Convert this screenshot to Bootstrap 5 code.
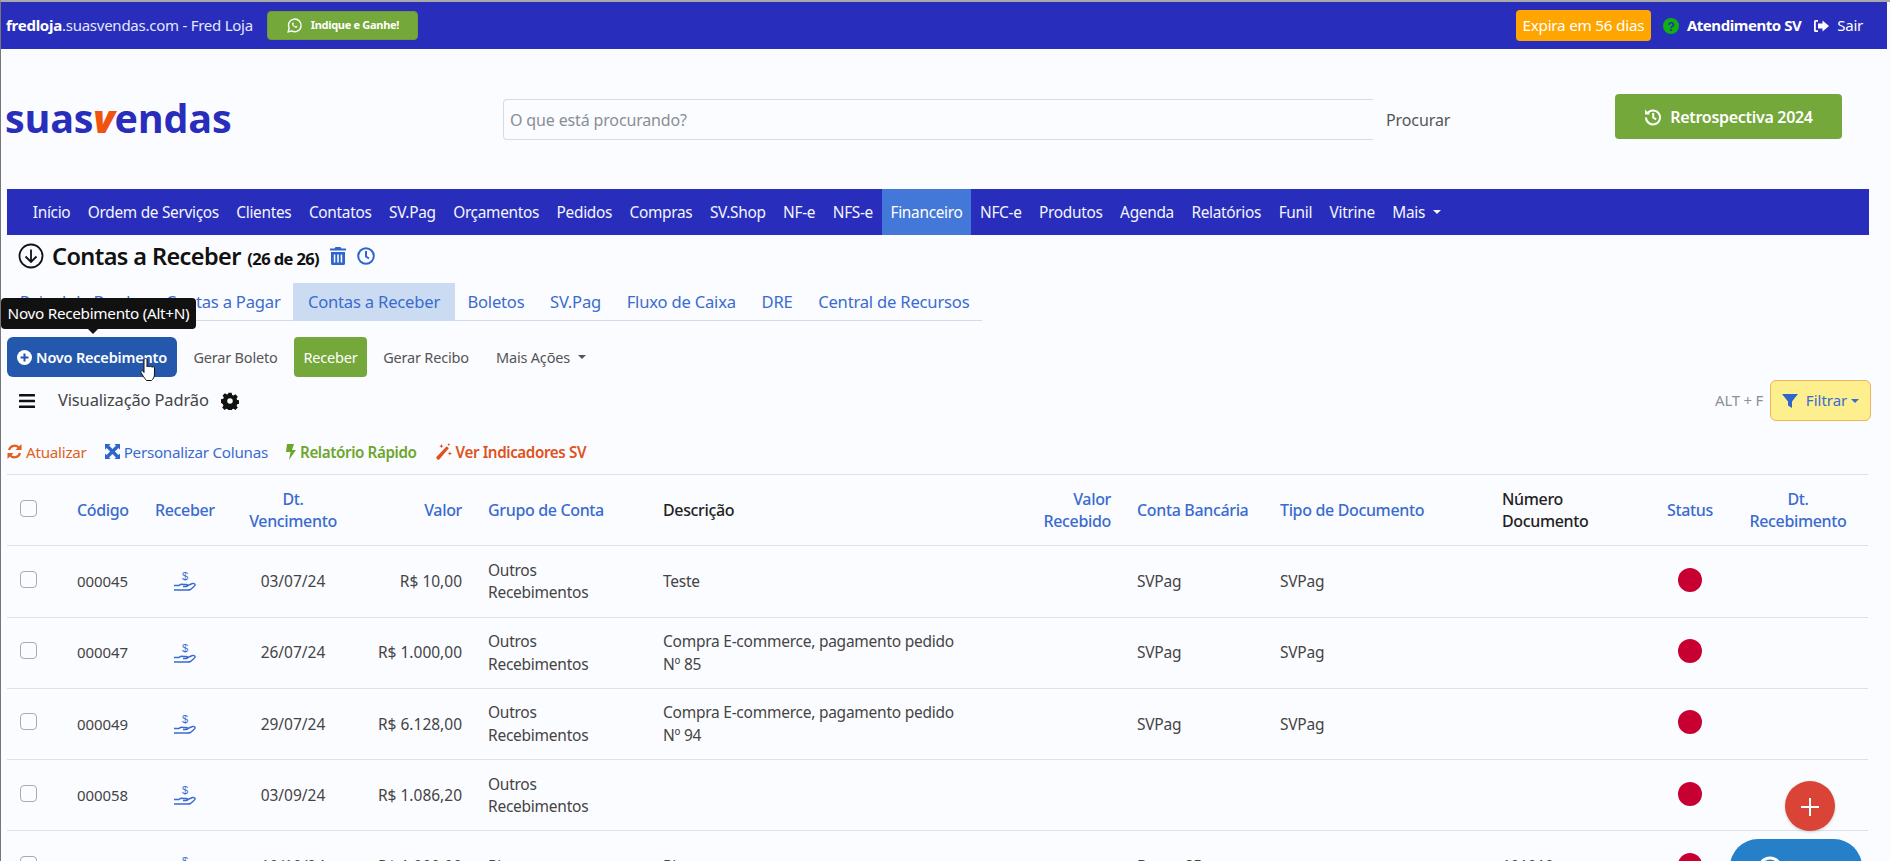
<!DOCTYPE html>
<html lang="pt-BR">
<head>
<meta charset="utf-8">
<title>Contas a Receber</title>
<link href="https://cdn.jsdelivr.net/npm/bootstrap@5.3.0/dist/css/bootstrap.min.css" rel="stylesheet">
<style>
:root{--sv-blue:#282ebb;--sv-link:#3a6bd0;--sv-green:#75a83a;}
html,body{height:861px;overflow:hidden;}
body{background:#fbfcff;font-family:"Noto Sans","Open Sans",sans-serif;font-size:15px;color:#444;letter-spacing:-.25px;}
.page-frame{height:861px;border-top:2px solid #a9a9a9;border-left:1px solid #777;position:relative;overflow:hidden;}
.top-strip{background:var(--sv-blue);height:47px;margin-right:3px;padding:0 24px 0 5px;color:#e4e6fa;font-size:15px;}
.top-strip b{color:#fff;font-weight:700;}
.indique{background:var(--sv-green);color:#fff;font-size:11px;font-weight:700;border:1px solid #6d9c36;border-radius:4px;padding:0;width:151px;height:29px;margin-left:14px;letter-spacing:-.3px;}
.indique:hover{background:var(--sv-green);color:#fff;}
.expira{background:#ffa500;color:#fff;font-size:15.300px;border-radius:4px;width:135px;height:31px;line-height:31px;text-align:center;}
.top-link{color:#fff;font-size:15px;}
.top-strip b.top-link{letter-spacing:-.45px;margin-right:12px;}
.gap-icon{margin:0 8px 0 12px;}
.head-zone{height:140px;padding:0 48px 0 4px;}
.logo-text{font-family:"Open Sans","Noto Sans",sans-serif;font-size:39.500px;font-weight:700;color:var(--sv-blue);letter-spacing:-.2px;line-height:1;width:498px;flex:none;}
.logo-text i{color:#f0530f;font-weight:800;}
.search-box{width:870px;height:41px;border:1px solid #d8dbe2;border-right:0;border-radius:4px 0 0 4px;background:transparent;font-size:16px;padding:2px 6px 0;letter-spacing:-.15px;box-shadow:none;flex:none;}
.search-box::placeholder{color:#888e96;}
.search-go{color:#555;font-size:16px;padding:2px 13px 0;border:0;letter-spacing:-.1px;}
.retro{background:var(--sv-green);color:#fff;width:227px;height:45px;font-size:16px;font-weight:600;border:0;border-radius:4px;margin-left:auto;margin-bottom:5px;letter-spacing:-.3px;}
.retro:hover{background:var(--sv-green);color:#fff;}
.main-menu{background:var(--sv-blue);height:46px;margin:0 21px 0 6px;padding-left:17px;flex-wrap:nowrap;}
.main-menu .nav-link{color:#f4f5ff;font-size:15.400px;padding:0 8.760px;line-height:47px;height:46px;white-space:nowrap;letter-spacing:-.3px;}
.main-menu .nav-link.active{background:#4377d8;color:#fff;}
.main-menu .dropdown-toggle::after{margin-left:8px;}
.title-row{height:48px;padding:0 0 6px 17px;color:#111;}
.title-row h1{font-size:23.500px;font-weight:600;margin:0 11px 0 8px;letter-spacing:-.6px;}
.title-row small{font-size:16.500px;font-weight:700;margin-left:1px;letter-spacing:-.6px;}
.fin-tabs{width:975px;margin-left:6px;border-bottom:1px solid #d3dceb;height:38px;flex-wrap:nowrap;}
.fin-tabs .nav-link{color:var(--sv-link);font-size:16.600px;padding:0 12.800px;line-height:38px;border:0;border-radius:0;white-space:nowrap;letter-spacing:-.2px;}
.fin-tabs .nav-link.active{background:#cbdcf2;color:var(--sv-link);padding:0 14.500px;}
.act-row{position:relative;margin:16px 0 0 6px;height:40px;gap:0;}
.act-btn{color:#555;font-size:14.500px;padding:0;height:40px;line-height:40px;border:0;letter-spacing:-.2px;}
.act-btn.dropdown-toggle::after{margin-left:8px;}
.act-new{background:#2458ad;color:#fff;width:170px;font-weight:600;font-size:14.500px;position:relative;}
.act-new:hover{background:#2458ad;color:#fff;}
.act-get{background:var(--sv-green);color:#fff;width:73px;border-radius:4px;}
.act-get:hover{background:var(--sv-green);color:#fff;}
.tooltip.tip-box{position:absolute;left:-6px;top:-39px;margin:0;padding:0 0 6px;opacity:1;}
.tip-box .tooltip-inner{background:#111;max-width:none;width:195px;height:31px;line-height:31px;padding:0;font-size:15.300px;text-align:center;border-radius:4px;letter-spacing:-.3px;font-family:"Noto Sans",sans-serif;white-space:nowrap;}
.tip-box .tooltip-arrow{left:86px;bottom:0;position:absolute;}
.tip-box .tooltip-arrow::before{border-top-color:#111;}
.cursor-hand{position:absolute;left:133px;top:20px;}
.view-row{height:44px;margin-left:18px;margin-right:19px;padding-top:3px;}
.view-name{font-size:16.500px;color:#444;margin:0 12px 0 23px;letter-spacing:-.15px;}
.alt-hint{color:#8c9196;font-size:15px;margin-right:7px;}
.filter-btn{background:#fdef8e;border:1px solid #f0b45f;color:var(--sv-link);font-size:15px;width:101px;height:41px;padding:0;}
.filter-btn:hover{background:#fdef8e;color:var(--sv-link);}
.link-row{margin:15px 0 6px 6px;height:32px;gap:18px;font-size:15.200px;}
.link-row span{white-space:nowrap;display:inline-flex;align-items:center;gap:4px;}
.c-orange{color:#e0611c;}
.c-blue{color:var(--sv-link);}
.c-green{color:#6da62c;font-weight:600;letter-spacing:-.4px;}
.c-redorange{color:#e0521c;font-weight:600;letter-spacing:-.4px;}
.grid-zone{margin:0 21px 0 6px;}
.data-grid{table-layout:fixed;width:1861px;margin:0;--bs-table-bg:transparent;border-top:1px solid #dee2e6;}
.data-grid th,.data-grid td{padding:0 8px;vertical-align:middle;line-height:22.500px;border-color:#dee2e6;color:#444;font-size:15.500px;font-weight:400;}
.data-grid tr{height:71.250px;}
.data-grid th{font-weight:500;color:#222;letter-spacing:-.35px;font-size:16px;}
.data-grid th.lnk{color:var(--sv-link);}
.data-grid .chk{padding-left:13px;}
.data-grid .form-check-input{width:17px;height:17px;margin:0;border-color:#aaa;background-color:transparent;border-radius:4px;display:block;position:relative;top:-2px;}
.data-grid .rgt{text-align:right;padding-right:18px;}
.data-grid .ctr{text-align:center;}
.data-grid td.dte{letter-spacing:0;}
.data-grid td.cde{letter-spacing:-.1px;font-size:15px;}
.status-dot{display:block;width:24px;height:24px;border-radius:50%;background:#c80032;margin:-3px auto 0;}
.fab-add{position:absolute;left:1784px;top:779px;width:50px;height:50px;border-radius:50%;background:#d94436;border:0;padding:0;box-shadow:0 1px 3px rgba(0,0,0,.2);}
.chat-pill{position:absolute;left:1729px;top:837px;width:132px;height:60px;border-radius:28px;background:#2680c9;}
.chat-pill svg{position:absolute;left:25px;top:15px;}
</style>
</head>
<body>
<div class="page-frame">

<div class="top-strip d-flex align-items-center">
  <span><b>fredloja</b>.suasvendas.com - Fred Loja</span>
  <button class="btn indique d-flex align-items-center justify-content-center gap-2" type="button">
    <svg width="17" height="17" viewBox="0 0 24 24" fill="none" stroke="#fff" stroke-width="2"><path d="M3 21l1.400-5A9 9 0 1 1 8 19.700z"/><path d="M9 8c-1 1-.8 2.500.7 4.500s3.300 3 4.800 2.800c1-.2 1.500-1 1.500-1.800l-2-1-1 .9c-1-.4-2.200-1.600-2.700-2.800l.8-1-1-2z" fill="#fff" stroke="none"/></svg>
    Indique e Ganhe!
  </button>
  <div class="ms-auto d-flex align-items-center">
    <span class="expira">Expira em 56 dias</span>
    <svg class="gap-icon" width="16" height="16" viewBox="0 0 16 16"><circle cx="8" cy="8" r="8" fill="#10b010"/><text x="8" y="12.500" font-size="12" font-weight="700" text-anchor="middle" fill="#282ebb" font-family="Liberation Sans">?</text></svg>
    <b class="top-link">Atendimento SV</b>
    <svg width="16" height="14" viewBox="0 0 16 14" fill="#fff"><path d="M5 1H2.500A1.500 1.500 0 0 0 1 2.500v9A1.500 1.500 0 0 0 2.500 13H5v-1.800H2.800V2.800H5z"/><path d="M9.500 1.500L16 7l-6.500 5.500V9.500H5v-5h4.500z"/></svg>
    <span class="top-link ms-2">Sair</span>
  </div>
</div>

<div class="head-zone d-flex align-items-center">
  <div class="logo-text">suas<i>v</i>endas</div>
  <input class="form-control search-box" placeholder="O que está procurando?">
  <button class="btn search-go" type="button">Procurar</button>
  <button class="btn retro d-flex align-items-center justify-content-center gap-2" type="button">
    <svg width="18" height="18" viewBox="0 0 18 18" fill="none" stroke="#fff" stroke-width="2"><path d="M3.200 5.500A7 7 0 1 1 2 9.500"/><path d="M1 1.500v5h5z" fill="#fff" stroke="none"/><path d="M9.200 5v4.500l3 1.800"/></svg>
    Retrospectiva 2024
  </button>
</div>

<ul class="nav main-menu">
  <li class="nav-item"><a class="nav-link" href="#">Início</a></li>
  <li class="nav-item"><a class="nav-link" href="#">Ordem de Serviços</a></li>
  <li class="nav-item"><a class="nav-link" href="#">Clientes</a></li>
  <li class="nav-item"><a class="nav-link" href="#">Contatos</a></li>
  <li class="nav-item"><a class="nav-link" href="#">SV.Pag</a></li>
  <li class="nav-item"><a class="nav-link" href="#">Orçamentos</a></li>
  <li class="nav-item"><a class="nav-link" href="#">Pedidos</a></li>
  <li class="nav-item"><a class="nav-link" href="#">Compras</a></li>
  <li class="nav-item"><a class="nav-link" href="#">SV.Shop</a></li>
  <li class="nav-item"><a class="nav-link" href="#">NF-e</a></li>
  <li class="nav-item"><a class="nav-link" href="#">NFS-e</a></li>
  <li class="nav-item"><a class="nav-link active" href="#">Financeiro</a></li>
  <li class="nav-item"><a class="nav-link" href="#">NFC-e</a></li>
  <li class="nav-item"><a class="nav-link" href="#">Produtos</a></li>
  <li class="nav-item"><a class="nav-link" href="#">Agenda</a></li>
  <li class="nav-item"><a class="nav-link" href="#">Relatórios</a></li>
  <li class="nav-item"><a class="nav-link" href="#">Funil</a></li>
  <li class="nav-item"><a class="nav-link" href="#">Vitrine</a></li>
  <li class="nav-item"><a class="nav-link dropdown-toggle" href="#">Mais</a></li>
</ul>

<div class="title-row d-flex align-items-center">
  <svg width="26" height="26" viewBox="0 0 26 26" fill="none" stroke="#111" stroke-width="1.800"><circle cx="13" cy="13" r="11.500"/><path d="M13 6.500v12.500M7.500 13.500l5.500 5.500 5.500-5.500"/></svg>
  <h1>Contas a Receber <small>(26 de 26)</small></h1>
  <svg class="me-2" style="margin-right:11px!important" width="16" height="18" viewBox="0 0 16 18" fill="#2f66cc"><path d="M5.500 0h5l1 1.500H16v2H0v-2h4.500z"/><path d="M1 5h14v11.500a1.500 1.500 0 0 1-1.500 1.500h-11A1.500 1.500 0 0 1 1 16.500zM3.800 7.500v8h1.500v-8zM7.200 7.500v8h1.600v-8zM10.700 7.500v8h1.500v-8z" fill-rule="evenodd"/></svg>
  <svg width="18" height="18" viewBox="0 0 18 18" fill="none" stroke="#2f66cc" stroke-width="2"><circle cx="9" cy="9" r="7.800"/><path d="M9 4v5.500l3 2"/></svg>
</div>

<ul class="nav fin-tabs">
  <li class="nav-item"><a class="nav-link" href="#">Painel de Bordo</a></li>
  <li class="nav-item"><a class="nav-link" href="#">Contas a Pagar</a></li>
  <li class="nav-item"><a class="nav-link active" href="#">Contas a Receber</a></li>
  <li class="nav-item"><a class="nav-link" href="#">Boletos</a></li>
  <li class="nav-item"><a class="nav-link" href="#">SV.Pag</a></li>
  <li class="nav-item"><a class="nav-link" href="#">Fluxo de Caixa</a></li>
  <li class="nav-item"><a class="nav-link" href="#">DRE</a></li>
  <li class="nav-item"><a class="nav-link" href="#">Central de Recursos</a></li>
</ul>

<div class="act-row d-flex">
  <div class="tooltip bs-tooltip-top show tip-box" role="tooltip"><div class="tooltip-arrow"></div><div class="tooltip-inner">Novo Recebimento (Alt+N)</div></div>
  <button class="btn act-btn act-new d-flex align-items-center justify-content-center gap-1" type="button">
    <svg width="15" height="15" viewBox="0 0 16 16"><circle cx="8" cy="8" r="8" fill="#fff"/><path d="M8 3.800v8.400M3.800 8h8.400" stroke="#2458ad" stroke-width="2.200"/></svg>
    Novo Recebimento
    <svg class="cursor-hand" width="17" height="24" viewBox="0 0 17 24" fill="#fff" stroke="#111" stroke-width="1"><path d="M5.500 1.500c1 0 1.500.7 1.500 1.500v7c0-1 2.500-1 2.500 0 0-1 2.500-1 2.500 .3 0-1 2.500-.8 2.500.7v6c0 3-1.500 5.500-3 6.500H6.500c-1-1-2.500-3-4-5.500L1 15.500c-.7-1.500 1-2.500 2-1.500l1 1.500V3c0-.8.500-1.500 1.500-1.500z"/></svg>
  </button>
  <button class="btn act-btn" style="width:117px" type="button">Gerar Boleto</button>
  <button class="btn act-btn act-get" type="button">Receber</button>
  <button class="btn act-btn" style="width:118px" type="button">Gerar Recibo</button>
  <button class="btn act-btn dropdown-toggle" style="width:112px" type="button">Mais Ações</button>
</div>

<div class="view-row d-flex align-items-center">
  <svg width="16" height="14" viewBox="0 0 16 14" fill="#111"><rect y="0" width="16" height="2.400" rx=".5"/><rect y="5.800" width="16" height="2.400" rx=".5"/><rect y="11.600" width="16" height="2.400" rx=".5"/></svg>
  <span class="view-name">Visualização Padrão</span>
  <svg width="18" height="18" viewBox="-1 -1 26 26" fill="#111"><path fill-rule="evenodd" d="M9.600 0h4.800l.7 3.300 2 .8 2.800-1.800 3.400 3.400-1.800 2.800.8 2 3.300.7v4.800l-3.300.7-.8 2 1.800 2.800-3.400 3.400-2.800-1.800-2 .8-.7 3.300H9.600l-.7-3.300-2-.8-2.800 1.800-3.400-3.400 1.800-2.800-.8-2L-1 14.400V9.600l3.300-.7.800-2-1.800-2.800 3.400-3.400 2.800 1.800 2-.8zM12 8a4 4 0 1 0 0 8 4 4 0 0 0 0-8z"/></svg>
  <span class="alt-hint ms-auto">ALT + F</span>
  <button class="btn filter-btn dropdown-toggle d-flex align-items-center justify-content-center" type="button">
    <svg class="me-2" width="16" height="16" viewBox="0 0 16 16" fill="#2f66cc"><path d="M0 1h16l-6 7.500V15l-4-2.500V8.500z"/></svg>Filtrar
  </button>
</div>

<div class="link-row d-flex align-items-center">
  <span class="c-orange"><svg width="15" height="15" viewBox="0 0 16 16" fill="none" stroke="#e0611c" stroke-width="2.400"><path d="M2.200 6.500A6 6 0 0 1 13 4.500"/><path d="M13.800 9.500A6 6 0 0 1 3 11.500"/><path d="M15.500 0v6.500H9z" fill="#e0611c" stroke="none"/><path d="M.5 16V9.500H7z" fill="#e0611c" stroke="none"/></svg>Atualizar</span>
  <span class="c-blue"><svg width="15" height="15" viewBox="0 0 16 16" fill="#2f66cc"><path d="M0 0h6L4.300 1.700 8 5.400l3.700-3.700L10 0h6v6l-1.700-1.700L10.600 8l3.700 3.700L16 10v6h-6l1.700-1.700L8 10.600l-3.700 3.700L6 16H0v-6l1.700 1.700L5.400 8 1.700 4.300 0 6z"/></svg>Personalizar Colunas</span>
  <span class="c-green"><svg width="10" height="16" viewBox="0 0 10 16" fill="#6da62c"><path d="M1 0h7L6 6h4L3 16l1.500-8H0z"/></svg>Relatório Rápido</span>
  <span class="c-redorange"><svg width="17" height="17" viewBox="0 0 16 16" fill="#e0521c"><path d="M11 3l2 2L4 15.500c-.5.500-1.200.5-1.700 0l-.8-.8c-.5-.5-.5-1.200 0-1.700z"/><path d="M6 1l.6 1.400L8 3l-1.400.6L6 5l-.6-1.400L4 3l1.400-.6zM14 8l.5 1.200L16 10l-1.500.6L14 12l-.5-1.400L12 10l1.500-.8zM13 0l.4 1 1.100.4-1.100.5L13 3l-.4-1.100-1.100-.5 1.100-.4z"/></svg>Ver Indicadores SV</span>
</div>

<div class="grid-zone">
<table class="table data-grid">
  <colgroup>
    <col style="width:62px"><col style="width:78px"><col style="width:75px"><col style="width:142px"><col style="width:116px"><col style="width:175px"><col style="width:345px"><col style="width:129px"><col style="width:143px"><col style="width:222px"><col style="width:158px"><col style="width:76px"><col style="width:140px">
  </colgroup>
  <thead>
    <tr>
      <th class="chk"><input class="form-check-input" type="checkbox" aria-label="Selecionar todos"></th>
      <th class="lnk">Código</th>
      <th class="lnk">Receber</th>
      <th class="lnk ctr">Dt.<br>Vencimento</th>
      <th class="lnk rgt">Valor</th>
      <th class="lnk">Grupo de Conta</th>
      <th>Descrição</th>
      <th class="lnk rgt">Valor<br>Recebido</th>
      <th class="lnk">Conta Bancária</th>
      <th class="lnk">Tipo de Documento</th>
      <th>Número<br>Documento</th>
      <th class="lnk ctr">Status</th>
      <th class="lnk ctr">Dt.<br>Recebimento</th>
    </tr>
  </thead>
  <tbody id="rows"></tbody>
</table>
</div>

<button class="fab-add" type="button" aria-label="Adicionar"><svg width="20" height="20" viewBox="0 0 20 20" stroke="#fff" stroke-width="2"><path d="M10 1v18M1 10h18"/></svg></button>
<div class="chat-pill"><svg width="30" height="30" viewBox="0 0 30 30" fill="none" stroke="#fff" stroke-width="3"><circle cx="15" cy="15" r="11"/></svg></div>

</div>
<script>
var data=[
["000045","03/07/24","R$ 10,00","Outros<br>Recebimentos","Teste","SVPag","SVPag",""],
["000047","26/07/24","R$ 1.000,00","Outros<br>Recebimentos","Compra E-commerce, pagamento pedido<br>Nº 85","SVPag","SVPag",""],
["000049","29/07/24","R$ 6.128,00","Outros<br>Recebimentos","Compra E-commerce, pagamento pedido<br>Nº 94","SVPag","SVPag",""],
["000058","03/09/24","R$ 1.086,20","Outros<br>Recebimentos","","","",""],
["000090","10/10/24","R$ 1.000,00","Pix","Pix","Banco 85","","101010"]
];
var hand='<svg width="24" height="22" viewBox="0 0 24 22" fill="none" stroke="#3a6bd0" stroke-width="1.400"><text x="12" y="9" font-size="11" text-anchor="middle" fill="#3a6bd0" stroke="none" font-family="Liberation Sans">$</text><path d="M1 14.500h5c1.500-1.500 3-1.500 4.500-1h3c1.300 0 1.300 2 0 2H10"/><path d="M13.500 15l6-2.500c1.500-.5 3 .8 2.500 1.700-.3.700-3 3-4.500 4.300-1 .5-2 .5-3 .5H1"/></svg>';
document.getElementById('rows').innerHTML=data.map(function(r){
  return '<tr><td class="chk"><input class="form-check-input" type="checkbox" aria-label="Selecionar"></td>'+
  '<td class="cde">'+r[0]+'</td><td class="ctr">'+hand+'</td><td class="ctr dte">'+r[1]+'</td><td class="rgt dte">'+r[2]+'</td>'+
  '<td>'+r[3]+'</td><td>'+r[4]+'</td><td></td><td>'+r[5]+'</td><td>'+r[6]+'</td><td>'+r[7]+'</td>'+
  '<td><span class="status-dot"></span></td><td></td></tr>';
}).join('');
</script>
</body>
</html>
